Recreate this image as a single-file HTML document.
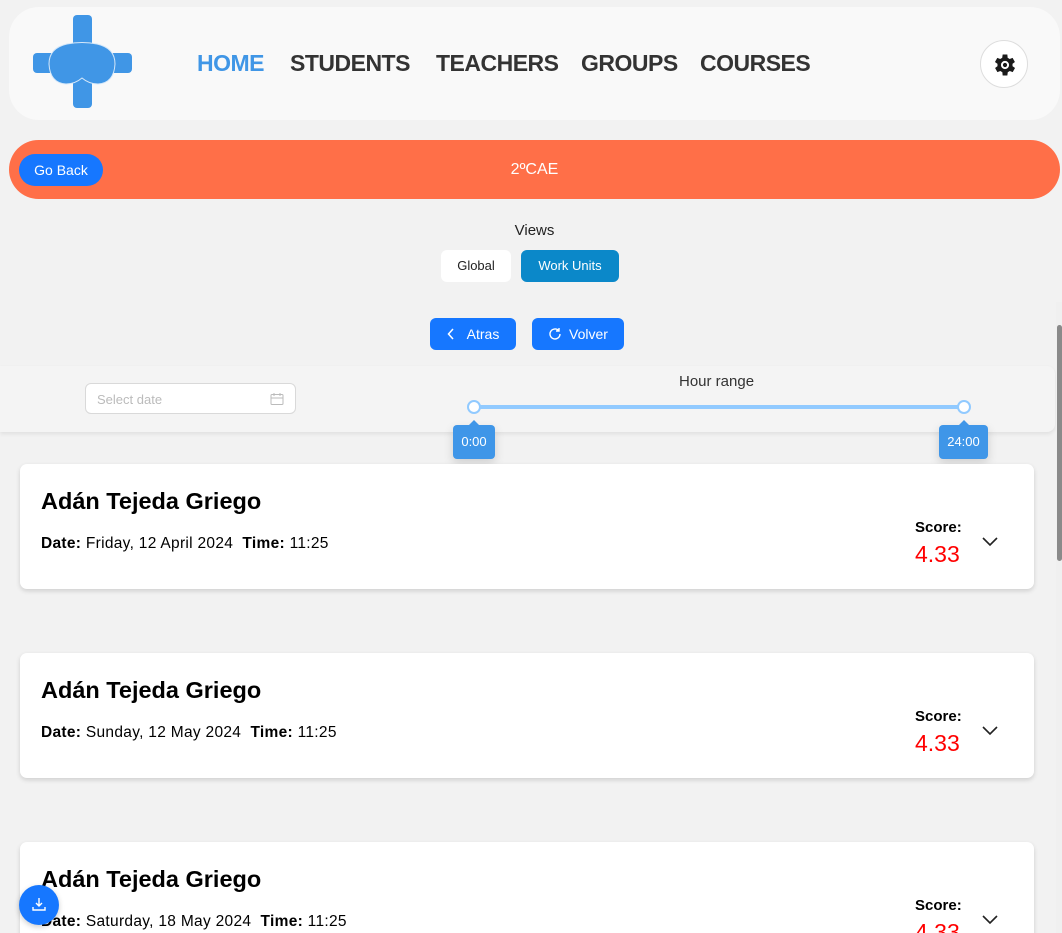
<!DOCTYPE html>
<html><head><meta charset="utf-8"><style>
*{box-sizing:border-box;margin:0;padding:0}
html,body{width:1062px;height:933px;overflow:hidden}
body{background:#f2f2f2;font-family:"Liberation Sans",sans-serif;position:relative}
.nav{position:absolute;left:9px;top:7px;width:1051px;height:113px;background:#f9f9f9;border-radius:30px}
.nav a{position:absolute;top:43px;font-weight:bold;font-size:23px;color:#333;text-decoration:none;letter-spacing:-0.5px}
.gear{position:absolute;left:980px;top:40px;width:48px;height:48px;border-radius:50%;background:#fff;border:1px solid #ddd}
.bar{position:absolute;left:9px;top:140px;width:1051px;height:59px;background:#ff6f48;border-radius:30px}
.goback{position:absolute;left:19px;top:154px;width:84px;height:32px;background:#1677ff;color:#fff;border-radius:16px;font-size:14px;text-align:center;line-height:32px}
.btn{position:absolute;height:32px;border-radius:6px;font-size:14px;text-align:center;line-height:32px}
.panel{position:absolute;left:0;top:366px;width:1055px;height:66px;background:#f4f4f4;border-radius:0 8px 8px 0;box-shadow:0 2px 4px rgba(0,0,0,.08)}
.card{position:absolute;left:20px;width:1014px;height:125px;background:#fff;border-radius:7px;box-shadow:0 2px 5px rgba(0,0,0,.15)}
.card h2{position:absolute;left:21px;top:24px;font-size:23.5px;font-weight:bold}
.card .d{position:absolute;left:21px;top:71px;font-size:15.5px;letter-spacing:0.3px}
.card .s{position:absolute;left:895px;top:55px;font-size:15px;font-weight:bold}
.card .v{position:absolute;left:895px;top:77px;font-size:23px;color:#f00}
.card svg{position:absolute;left:962px;top:73px}
.tip{position:absolute;top:425px;height:34px;background:#3f96e8;color:#fff;font-size:13px;border-radius:4px;line-height:34px;text-align:center;box-shadow:0 4px 10px rgba(0,0,0,.15)}
.tip:before{content:"";position:absolute;left:50%;top:-5px;margin-left:-5px;border:5px solid transparent;border-top:0;border-bottom-color:#3f96e8}
.knob{position:absolute;top:400px;width:14px;height:14px;border-radius:50%;background:#fff;border:2px solid #91caff}
</style></head><body>
<div class="nav">
<svg style="position:absolute;left:0;top:0" width="140" height="110" viewBox="0 0 140 110">
<rect x="64" y="8" width="19" height="93" rx="4" fill="#4096e6"/>
<rect x="24" y="46" width="99" height="20" rx="4" fill="#4096e6"/>
<path d="M58 37 Q73 34 88 37 Q106 41 106 57 Q105 76 89 77 Q80 77 73 71 Q66 77 57 77 Q41 76 40 57 Q40 41 58 37Z" fill="#4096e6" stroke="#d6e8f9" stroke-width="1"/>
</svg>
<a style="left:188px;color:#4096e6">HOME</a><a style="left:281px">STUDENTS</a><a style="left:427px">TEACHERS</a><a style="left:572px">GROUPS</a><a style="left:691px">COURSES</a>
</div>
<div class="gear"><svg style="position:absolute;left:10px;top:10px" width="28" height="28" viewBox="0 0 24 24"><path fill="#1a1a1a" fill-rule="evenodd" d="M19.4 13a7.5 7.5 0 000-2l2.1-1.6-2-3.5-2.5 1a7 7 0 00-1.700-1L15 3h-4l-.4 2.9a7 7 0 00-1.7 1l-2.5-1-2 3.5L6.6 11a7.5 7.5 0 000 2l-2.1 1.6 2 3.5 2.5-1a7 7 0 001.7 1L11 21h4l.4-2.9a7 7 0 001.7-1l2.5 1 2-3.5zM13 15.5a3.5 3.5 0 110-7 3.5 3.5 0 010 7z" transform="translate(-1,0)"/><circle cx="12" cy="12" r="1.8" fill="#1a1a1a"/></svg></div>
<div class="bar"><div style="position:absolute;left:0;width:1051px;top:21px;text-align:center;color:#fff;font-size:16px">2ºCAE</div></div>
<div class="goback">Go Back</div>
<div style="position:absolute;left:0;width:1069px;top:222px;text-align:center;font-size:15px;color:#222">Views</div>
<div class="btn" style="left:441px;top:250px;width:70px;background:#fff;color:#222;font-size:13px">Global</div>
<div class="btn" style="left:521px;top:250px;width:98px;background:#0b88c9;color:#fff;font-size:13px">Work Units</div>
<div class="btn" style="left:430px;top:318px;width:86px;background:#1677ff;color:#fff"><svg width="8" height="12" viewBox="0 0 8 12" style="margin-right:12px;vertical-align:-1px"><path d="M6 1L1.5 6 6 11" fill="none" stroke="#fff" stroke-width="1.5"/></svg>Atras</div>
<div class="btn" style="left:532px;top:318px;width:92px;background:#1677ff;color:#fff"><svg width="14" height="14" viewBox="0 0 14 14" style="margin-right:7px;vertical-align:-2px"><path d="M12 7A5 5 0 1 1 10.5 3.4M11 1v3H8" fill="none" stroke="#fff" stroke-width="1.4"/></svg>Volver</div>
<div class="panel"></div>
<div style="position:absolute;left:85px;top:383px;width:211px;height:31px;background:#fff;border:1px solid #d9d9d9;border-radius:6px;font-size:13px;color:#bbb;padding:8px 11px">Select date<svg style="position:absolute;right:11px;top:8px" width="14" height="14" viewBox="0 0 14 14" fill="none" stroke="#bbb"><rect x="1" y="2.5" width="12" height="10" rx="1"/><path d="M1 6h12M4 1v3M10 1v3"/></svg></div>
<div style="position:absolute;left:679px;top:373px;font-size:15px;color:#333">Hour range</div>
<div style="position:absolute;left:474px;top:405px;width:490px;height:4px;background:#91caff;border-radius:2px"></div>
<div class="knob" style="left:467px"></div><div class="knob" style="left:957px"></div>
<div class="tip" style="left:453px;width:42px">0:00</div>
<div class="tip" style="left:939px;width:49px">24:00</div>
<div class="card" style="top:464px"><h2>Adán Tejeda Griego</h2><div class="d"><b>Date:</b> Friday, 12 April 2024&nbsp; <b>Time:</b> 11:25</div><div class="s">Score:</div><div class="v">4.33</div><svg width="16" height="10" viewBox="0 0 16 10"><path d="M1 1l7 7 7-7" fill="none" stroke="#222" stroke-width="1.6"/></svg></div>
<div class="card" style="top:653px"><h2>Adán Tejeda Griego</h2><div class="d"><b>Date:</b> Sunday, 12 May 2024&nbsp; <b>Time:</b> 11:25</div><div class="s">Score:</div><div class="v">4.33</div><svg width="16" height="10" viewBox="0 0 16 10"><path d="M1 1l7 7 7-7" fill="none" stroke="#222" stroke-width="1.6"/></svg></div>
<div class="card" style="top:842px"><h2>Adán Tejeda Griego</h2><div class="d"><b>Date:</b> Saturday, 18 May 2024&nbsp; <b>Time:</b> 11:25</div><div class="s">Score:</div><div class="v">4.33</div><svg width="16" height="10" viewBox="0 0 16 10"><path d="M1 1l7 7 7-7" fill="none" stroke="#222" stroke-width="1.6"/></svg></div>
<div style="position:absolute;left:19px;top:885px;width:40px;height:40px;border-radius:50%;background:#1677ff;box-shadow:0 2px 6px rgba(0,0,0,.2)"><svg style="position:absolute;left:13px;top:12px" width="14" height="14" viewBox="0 0 14 14" fill="none" stroke="#fff" stroke-width="1.4"><path d="M7 1v8M4 6l3 3 3-3M1 10v3h12v-3"/></svg></div>
<div style="position:absolute;left:1056px;top:302px;width:6px;height:631px;background:#f0f0f0"></div>
<div style="position:absolute;left:1057px;top:325px;width:5px;height:236px;background:#8a8a8a;border-radius:3px"></div>
</body></html>
